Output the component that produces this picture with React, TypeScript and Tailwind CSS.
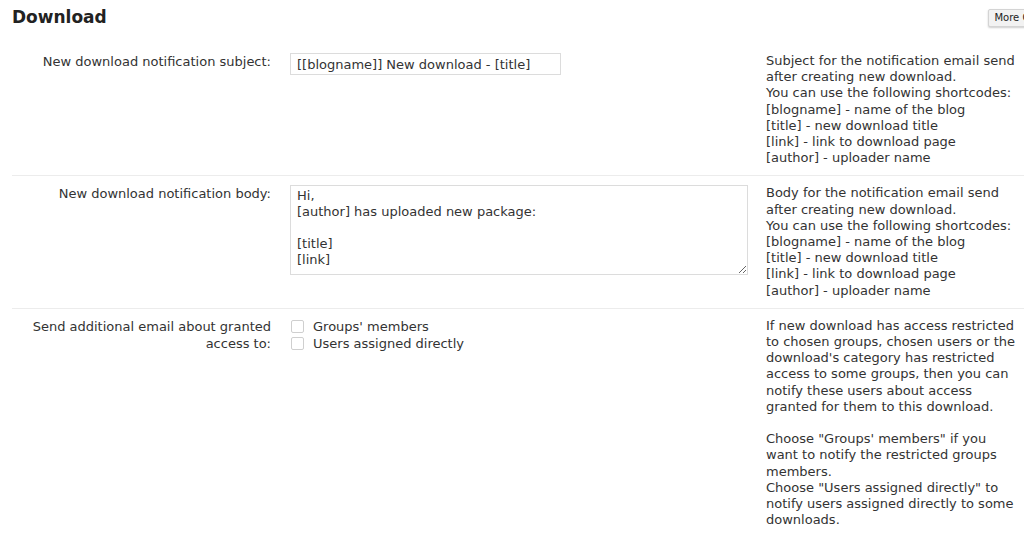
import React from 'react';

const SHORTCODES = [
  '[blogname] - name of the blog',
  '[title] - new download title',
  '[link] - link to download page',
  '[author] - uploader name',
];

function Row({ label, children, help, last }: { label: React.ReactNode; children: React.ReactNode; help: React.ReactNode; last?: boolean }) {
  return (
    <div className={`flex pt-[9px] pb-[9px] ${last ? '' : 'border-b border-[#ececec]'}`}>
      <div className="w-[259px] shrink-0 text-right text-[#333] leading-[17px]">{label}</div>
      <div className="w-[476px] shrink-0 pl-[19px]">{children}</div>
      <div className="pl-[19px] leading-[16.2px] text-[#333] whitespace-nowrap">{help}</div>
    </div>
  );
}

export default function App() {
  return (
    <div className="bg-white h-[535px] overflow-hidden text-[13px] pl-[12px]" style={{ fontFamily: '"DejaVu Sans", Verdana, sans-serif' }}>
      <div className="flex items-start justify-between h-[44px]">
        <h1 className="text-[17px] font-bold text-[#222] pt-[6px] leading-[22px]">Download</h1>
        <button className="mt-[9px] -mr-[43px] h-[18px] pl-[5px] pr-[5px] text-[10px] leading-[16px] text-[#222] bg-[#f2f2f2] border border-[#d4d4d4] rounded-[2px] shadow-[0_1px_2px_rgba(0,0,0,0.2)] whitespace-nowrap">
          More Options
        </button>
      </div>

      <Row
        label="New download notification subject:"
        help={
          <>
            <div>Subject for the notification email send</div>
            <div>after creating new download.</div>
            <div>You can use the following shortcodes:</div>
            {SHORTCODES.map(s => <div key={s}>{s}</div>)}
          </>
        }
      >
        <input
          type="text"
          defaultValue="[[blogname]] New download - [title]"
          className="w-[271px] h-[22px] px-[6px] border border-[#dcdcdc] text-[#333] text-[13px] outline-none"
          style={{ fontFamily: 'inherit' }}
        />
      </Row>

      <Row
        label="New download notification body:"
        help={
          <>
            <div>Body for the notification email send</div>
            <div>after creating new download.</div>
            <div>You can use the following shortcodes:</div>
            {SHORTCODES.map(s => <div key={s}>{s}</div>)}
          </>
        }
      >
        <textarea
          defaultValue={'Hi,\n[author] has uploaded new package:\n\n[title]\n[link]'}
          className="block w-[458px] h-[90px] px-[6px] pt-[2px] border border-[#dcdcdc] text-[#333] text-[13px] leading-4 outline-none"
          style={{ fontFamily: 'inherit' }}
        />
      </Row>

      <Row
        last
        label={
          <>
            Send additional email about granted
            <br />
            access to:
          </>
        }
        help={
          <>
            <div>If new download has access restricted</div>
            <div>to chosen groups, chosen users or the</div>
            <div>download's category has restricted</div>
            <div>access to some groups, then you can</div>
            <div>notify these users about access</div>
            <div>granted for them to this download.</div>
            <div>&nbsp;</div>
            <div>Choose "Groups' members" if you</div>
            <div>want to notify the restricted groups</div>
            <div>members.</div>
            <div>Choose "Users assigned directly" to</div>
            <div>notify users assigned directly to some</div>
            <div>downloads.</div>
          </>
        }
      >
        <div className="flex flex-col text-[#333] leading-[17px]">
          {["Groups' members", 'Users assigned directly'].map(t => (
            <label key={t} className="flex items-center gap-[9px]">
              <span className="w-[13px] h-[13px] border border-[#cfcfcf] bg-white rounded-[2px] ml-[1px]" />
              {t}
            </label>
          ))}
        </div>
      </Row>
    </div>
  );
}
